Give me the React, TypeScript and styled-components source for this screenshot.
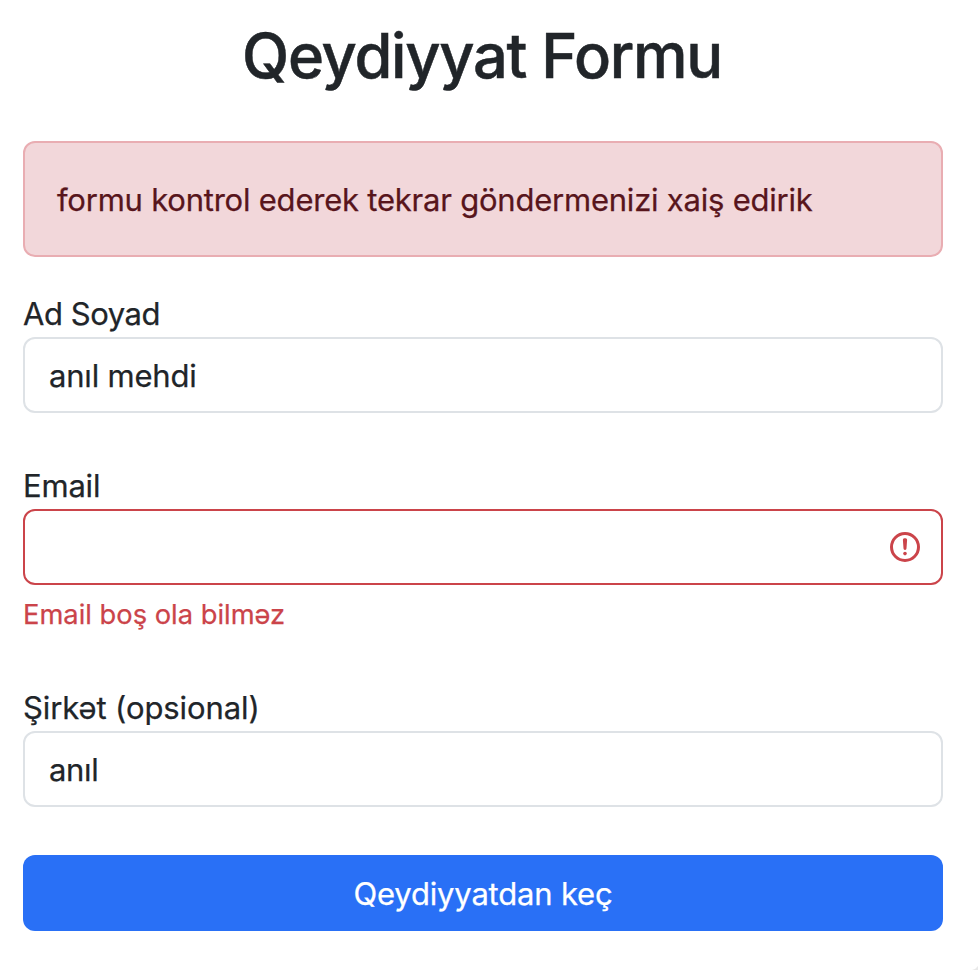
import React from "react";
import styled, { createGlobalStyle } from "styled-components";

const Global = createGlobalStyle`
  * { box-sizing: border-box; }
  body { margin: 0; background: #fff; color: #212529; font-family: Inter, "Liberation Sans", sans-serif; font-size: 31px; line-height: 50px; overflow: hidden; -webkit-text-stroke: 0.25px currentColor; }
`;
const Page = styled.main`
  position: relative; width: 978px; height: 970px; padding: 16px 35px 0 23px; background: #fff; overflow: hidden;
`;
const Title = styled.h1`
  margin: 0; height: 77px; padding-right: 2px; line-height: 80px; font-size: 61.4px; font-weight: 500; text-align: center;
  -webkit-text-stroke: 0.5px currentColor;
`;
const Text = styled.span<{ $track?: number }>`
  display: inline-block; white-space: nowrap; letter-spacing: ${(p) => p.$track ?? 0}px;
`;
const Alert = styled.div`
  margin-top: 48px; height: 116px; padding: 32px; border: 2px solid #e9adb2; border-radius: 12px;
  background: #f2d7da; color: #58151c;
`;
const Field = styled.div<{ $gap: number }>`
  display: flex; flex-direction: column; margin-top: ${(p) => p.$gap}px;
`;
const Label = styled.label`
  height: 48px;
`;
const Control = styled.div<{ $invalid?: boolean }>`
  display: flex; align-items: center; height: 76px; padding: 2px 18px 0 24px;
  border: 2px solid ${(p) => (p.$invalid ? "#cb444a" : "#dee2e6")}; border-radius: 12px;
`;
const AlertIcon = styled.svg`
  width: 36px; height: 36px; margin: -2px 0 0 auto;
`;
const Feedback = styled.div`
  margin-top: 8px; height: 42px; line-height: 43px; font-size: 27.3px; color: #cb444a;
`;
const Submit = styled.button`
  display: block; width: 100%; height: 76px; margin-top: 48px; padding: 2px 0 0; border: 0; border-radius: 12px;
  background: #2970f6; color: #fff; font: inherit;
`;
const Corner = styled.svg`
  position: absolute; right: 0; bottom: 0; width: 6px; height: 4px;
`;

export default function App() {
  return (
    <Page>
      <Global />
      <Title><Text $track={-1.27}>Qeydiyyat Formu</Text></Title>
      <Alert><Text $track={-0.22}>formu kontrol ederek tekrar göndermenizi xaiş edirik</Text></Alert>
      <Field $gap={32}>
        <Label><Text $track={-0.45}>Ad Soyad</Text></Label>
        <Control><Text $track={-0.2}>anıl mehdi</Text></Control>
      </Field>
      <Field $gap={48}>
        <Label><Text $track={-0.2}>Email</Text></Label>
        <Control $invalid>
          <AlertIcon viewBox="0 0 12 12" fill="none" stroke="#cb444a">
            <circle cx="6" cy="6" r="4.5" />
            <path strokeLinejoin="round" d="M5.8 3.6h.4L6 6.5z" />
            <circle cx="6" cy="8.2" r=".6" fill="#cb444a" stroke="none" />
          </AlertIcon>
        </Control>
        <Feedback><Text>Email boş ola bilməz</Text></Feedback>
      </Field>
      <Field $gap={48}>
        <Label><Text $track={-0.1}>Şirkət (opsional)</Text></Label>
        <Control><Text $track={-0.3}>anıl</Text></Control>
      </Field>
      <Submit><Text $track={-0.18}>Qeydiyyatdan keç</Text></Submit>
      <Corner viewBox="0 0 6 4"><path d="M0 4Q4 3 6 0V4Z" fill="#e9e9e9" /></Corner>
    </Page>
  );
}
